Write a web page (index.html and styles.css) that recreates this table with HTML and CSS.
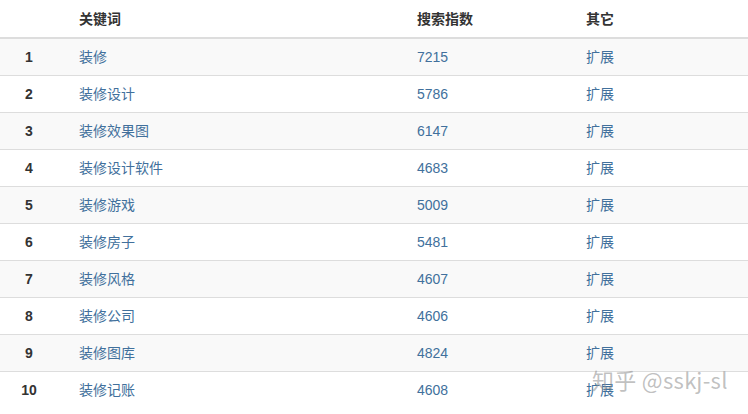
FILE: index.html
```html
<!DOCTYPE html>
<html lang="zh">
<head>
<meta charset="utf-8">
<link rel="stylesheet" href="styles.css">
</head>
<body>
<table class="table">
  <thead>
    <tr><th class="c-rank"></th><th class="c-kw">关键词</th><th class="c-idx">搜索指数</th><th class="c-other">其它</th></tr>
  </thead>
  <tbody>
    <tr><td class="rank">1</td><td><a>装修</a></td><td><a>7215</a></td><td><a>扩展</a></td></tr>
    <tr><td class="rank">2</td><td><a>装修设计</a></td><td><a>5786</a></td><td><a>扩展</a></td></tr>
    <tr><td class="rank">3</td><td><a>装修效果图</a></td><td><a>6147</a></td><td><a>扩展</a></td></tr>
    <tr><td class="rank">4</td><td><a>装修设计软件</a></td><td><a>4683</a></td><td><a>扩展</a></td></tr>
    <tr><td class="rank">5</td><td><a>装修游戏</a></td><td><a>5009</a></td><td><a>扩展</a></td></tr>
    <tr><td class="rank">6</td><td><a>装修房子</a></td><td><a>5481</a></td><td><a>扩展</a></td></tr>
    <tr><td class="rank">7</td><td><a>装修风格</a></td><td><a>4607</a></td><td><a>扩展</a></td></tr>
    <tr><td class="rank">8</td><td><a>装修公司</a></td><td><a>4606</a></td><td><a>扩展</a></td></tr>
    <tr><td class="rank">9</td><td><a>装修图库</a></td><td><a>4824</a></td><td><a>扩展</a></td></tr>
    <tr><td class="rank">10</td><td><a>装修记账</a></td><td><a>4608</a></td><td><a>扩展</a></td></tr>
  </tbody>
</table>
<div class="watermark">知乎 @sskj-sl</div>
</body>
</html>
```

FILE: styles.css
```css
html, body {
  margin: 0;
  padding: 0;
  background: #fff;
}
body {
  font-family: "Liberation Sans", "Noto Sans CJK SC", sans-serif;
  font-size: 14px;
  line-height: 20px;
  color: #333;
  position: relative;
  width: 748px;
  height: 414px;
  overflow: hidden;
}
.table {
  width: 748px;
  border-collapse: collapse;
  border-spacing: 0;
}
.table th, .table td {
  padding: 8px;
  text-align: left;
  vertical-align: top;
  height: 20px;
}
.table thead th {
  padding-top: 9px;
  font-weight: bold;
  border-bottom: 2px solid #ddd;
  color: #333;
}
.table tbody td {
  border-top: 1px solid #ddd;
}
.table tbody tr:first-child td {
  border-top: 0;
}
.table tbody tr:nth-child(odd) td {
  background: #f9f9f9;
}
.c-rank { width: 55px; }
.c-kw { width: 322px; }
.c-idx { width: 153px; }
.table td.rank {
  padding-right: 21px;
  text-align: center;
  font-weight: bold;
  color: #333;
}
.table a {
  color: #41709c;
  text-decoration: none;
}
.watermark {
  position: absolute;
  left: 592px;
  top: 364px;
  font-family: "Noto Sans CJK SC", "Liberation Sans", sans-serif;
  font-size: 22px;
  line-height: 30px;
  color: rgba(140, 140, 140, 0.55);
  letter-spacing: 0.3px;
  white-space: nowrap;
}
```
